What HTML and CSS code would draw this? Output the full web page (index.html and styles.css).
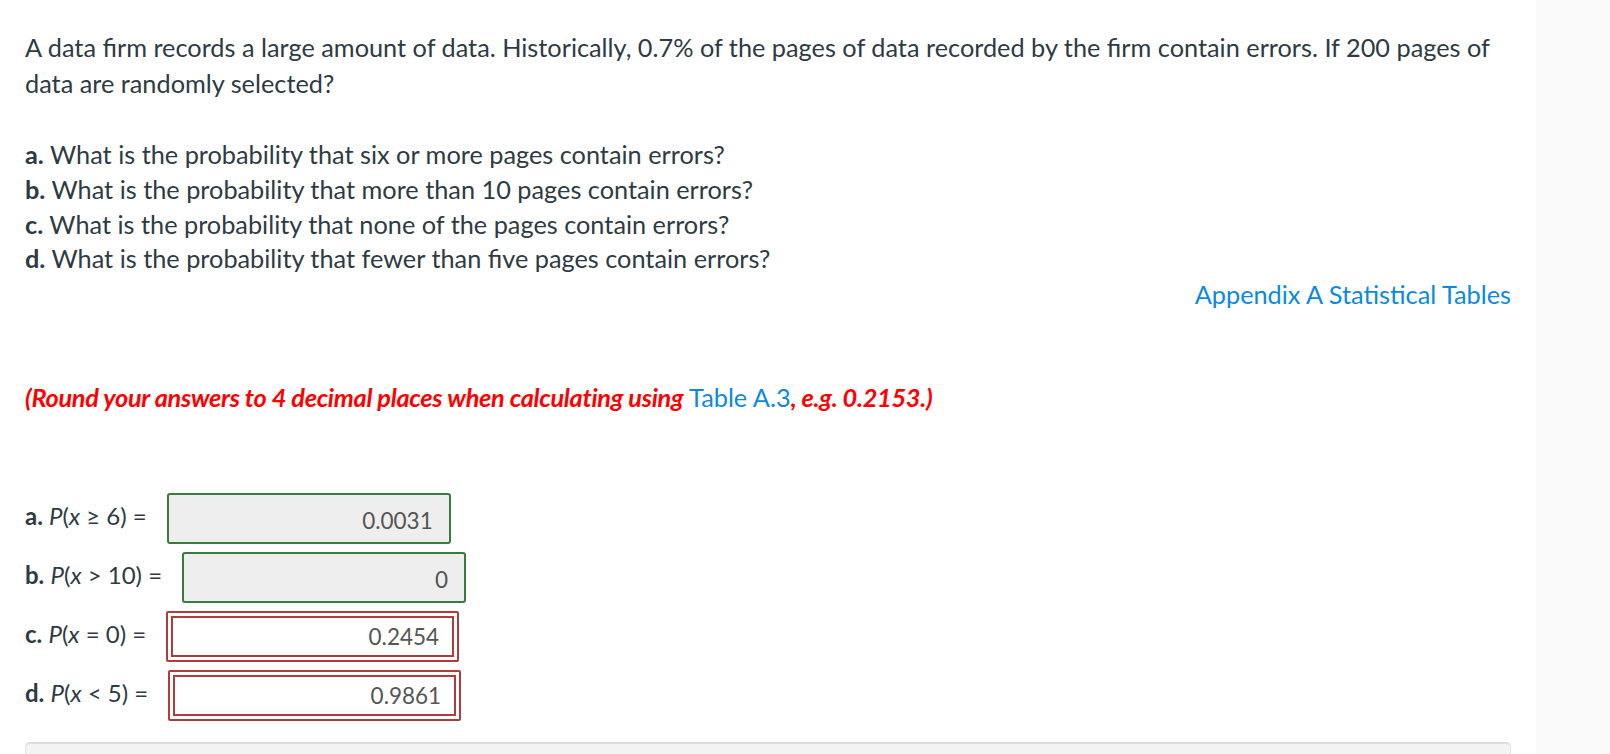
FILE: index.html
```html
<!DOCTYPE html>
<html lang="en">

<head>
  <meta charset="UTF-8">
  <meta name="viewport" content="width=device-width, initial-scale=1.0">
  <title>Question</title>
  <link rel="stylesheet" href="styles.css">
</head>

<body>
  <div class="page">
    <main class="question">
      <!-- question text -->
      <p class="stem">
        A data firm records a large amount of data. Historically, 0.7% of the pages of data recorded by the firm contain errors. If 200 pages of data are randomly selected?
      </p>
      <p class="parts">
        <b>a.</b> What is the probability that six or more pages contain errors?<br>
        <b>b.</b> What is the probability that more than 10 pages contain errors?<br>
        <b>c.</b> What is the probability that none of the pages contain errors?<br>
        <b>d.</b> What is the probability that fewer than five pages contain errors?
      </p>
      <div class="appendix">
        <a href="#">Appendix A Statistical Tables</a>
      </div>

      <p class="note">
        <em>(Round your answers to 4 decimal places when calculating using</em>
        <a href="#">Table A.3</a><em>, e.g. 0.2153.)</em>
      </p>

      <!-- answers -->
      <div class="answers">
        <div class="answer-row">
          <span class="label"><b>a.</b> <i>P</i>(<i>x</i> ≥ 6) =</span>
          <input class="answer correct" type="text" value="0.0031" readonly>
        </div>
        <div class="answer-row">
          <span class="label"><b>b.</b> <i>P</i>(<i>x</i> &gt; 10) =</span>
          <input class="answer correct" type="text" value="0" readonly>
        </div>
        <div class="answer-row">
          <span class="label"><b>c.</b> <i>P</i>(<i>x</i> = 0) =</span>
          <input class="answer wrong" type="text" value="0.2454" readonly>
        </div>
        <div class="answer-row">
          <span class="label"><b>d.</b> <i>P</i>(<i>x</i> &lt; 5) =</span>
          <input class="answer wrong" type="text" value="0.9861" readonly>
        </div>
      </div>

      <div class="panel"></div>
    </main>
    <aside class="rail"></aside>
  </div>
</body>

</html>
```

FILE: styles.css
```css
:root {
  --text: #2d3b45;
  --link: #0b8ae0;
  --note: #ff0000;
  --ok: #3a7a3a;
  --bad: #b03c3c;
}

* {
  margin: 0;
  padding: 0;
  box-sizing: border-box;
}

html,
body {
  height: 100%;
  overflow: hidden;
}

body {
  font-family: 'Lato', 'Liberation Sans', sans-serif;
  font-size: 25.3px;
  color: var(--text);
  background: #fff;
}

a {
  color: var(--link);
  text-decoration: none;
}

.page {
  display: flex;
  min-height: 100%;
}

.question {
  flex: 1;
  padding: 29px 25px 0 25px;
}

.rail {
  width: 74px;
  background: #f9f9f9;
}

/* question text */
.stem {
  line-height: 36px;
  margin-bottom: 36px;
}

.parts {
  line-height: 34.8px;
}

.appendix {
  text-align: right;
  line-height: 36px;
}

.note {
  line-height: 36px;
  margin-top: 67px;
}

.note em {
  font-weight: 700;
  font-style: italic;
  color: var(--note);
  letter-spacing: -0.3px;
}

/* answers */
.answers {
  display: flex;
  flex-direction: column;
  gap: 8px;
  margin-top: 78px;
}

.answer-row {
  display: flex;
  align-items: center;
  gap: 20px;
}

.label {
  font-size: 24px;
  line-height: 30px;
  margin-top: -6px;
}

.answer {
  width: 284px;
  height: 51px;
  padding: 4px 16px 0 10px;
  font-family: inherit;
  font-size: 22.5px;
  color: #555;
  text-align: right;
  border-radius: 3px;
  outline: none;
}

.answer.correct {
  background: #eeeeee;
  border: 2px solid var(--ok);
}

.answer.wrong {
  width: 293px;
  background: #fff;
  border: 7px double var(--bad);
  padding-right: 13px;
  padding-top: 0;
  border-radius: 2px;
}

/* bottom panel */
.panel {
  margin-top: 21px;
  height: 80px;
  background: #f3f3f3;
  border: 1px solid #e2e2e2;
  border-top: 2px solid #dcdcdc;
  border-radius: 5px;
}
```
